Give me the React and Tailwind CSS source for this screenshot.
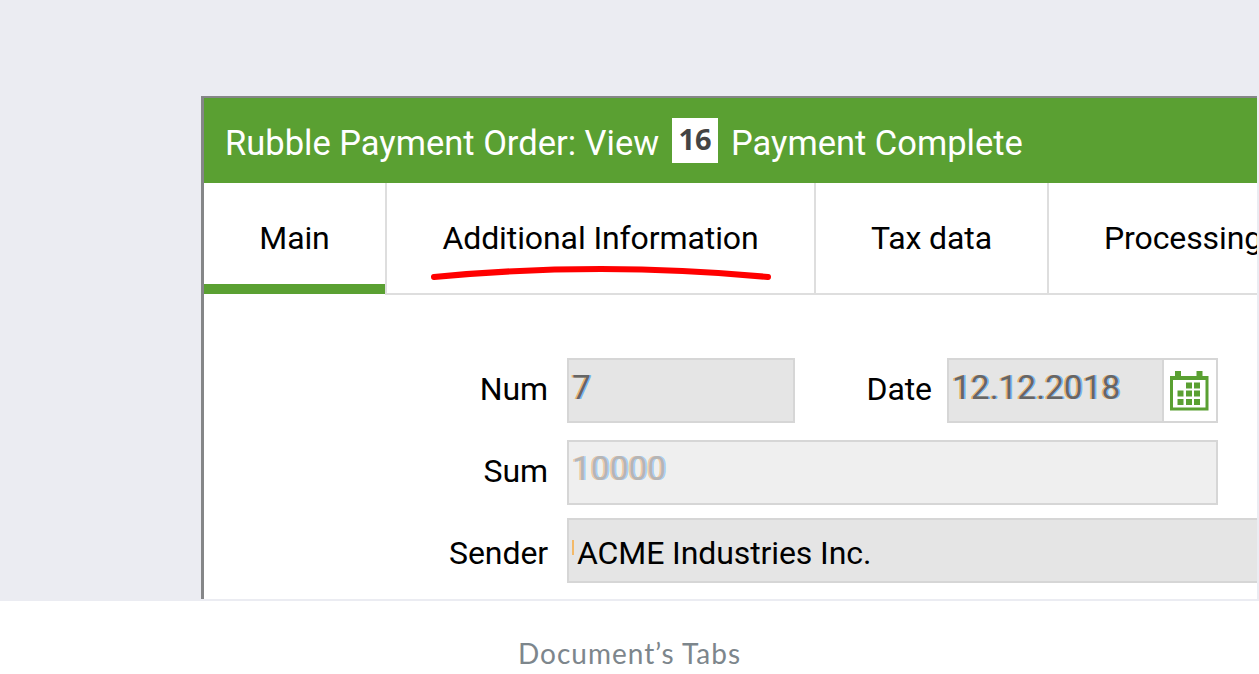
const FRINGE =
  "[text-shadow:-1.5px_0_0.5px_rgba(240,150,40,0.6),1.5px_0_0.5px_rgba(50,155,255,0.6)]";

function Label({ children, className = "" }) {
  return (
    <span
      className={`shrink-0 whitespace-nowrap text-right text-[32px] leading-[63px] tracking-[-0.1px] text-black ${className}`}
    >
      {children}
    </span>
  );
}

function CalendarIcon() {
  return (
    <svg width="40" height="40" viewBox="0 0 40 40" className="mr-[3px] block" fill="#5aa032">
      <rect x="6" y="0" width="6" height="7" />
      <rect x="27.500" y="0" width="6" height="7" />
      <path d="M1 5H39.500V39.500H1V5ZM4 9V36.500H36.500V9H4Z" fillRule="evenodd" />
      <rect x="17" y="11.500" width="6" height="6" />
      <rect x="25" y="11.500" width="6" height="6" />
      <rect x="8.500" y="19.500" width="6" height="6" />
      <rect x="17" y="19.500" width="6" height="6" />
      <rect x="25" y="19.500" width="6" height="6" />
      <rect x="8.500" y="28" width="6" height="6" />
      <rect x="17" y="28" width="6" height="6" />
      <rect x="25" y="28" width="6" height="6" />
    </svg>
  );
}

export default function App() {
  return (
    <div className="flex h-[674px] w-[1259px] flex-col overflow-hidden bg-white font-[Roboto,'Liberation_Sans',sans-serif]">
      <div className="h-[601px] shrink-0 bg-[#ebecf2] pt-24 pr-[2px] pb-[2px] pl-[201px]">
        <main className="flex h-[503px] flex-col overflow-hidden border-t-2 border-l-[3px] border-[#858688] bg-white">
          <header className="flex h-[85px] shrink-0 items-center bg-[#5aa032] pl-[21px] text-[34.5px] whitespace-nowrap text-white">
            <span className="w-[447px] pt-[7px] tracking-[0px]">Rubble Payment Order: View</span>
            <span className="flex h-[45px] w-[46px] items-center justify-center bg-white pb-[3px] font-['Noto_Sans',sans-serif] text-[29px] font-bold text-[#444]">
              16
            </span>
            <span className="ml-[13px] pt-[7px] tracking-[0px]">Payment Complete</span>
          </header>

          <nav className="flex h-[112px] shrink-0 text-[32px] tracking-[-0.1px] whitespace-nowrap text-black">
            <div className="flex w-[181px] shrink-0 flex-col">
              <span className="h-[101px] text-center leading-[111px]">Main</span>
              <span className="h-[10px] bg-[#5aa032]" />
            </div>
            <div className="relative w-[429px] shrink-0 border-b-2 border-l-2 border-[#dedede] text-center leading-[111px]">
              Additional Information
              <svg
                className="absolute top-[80px] left-[42px]"
                width="346"
                height="20"
                viewBox="0 0 346 20"
                fill="none"
                stroke="#ff0000"
                strokeWidth="6"
                strokeLinecap="round"
              >
                <path d="M5 14Q172 -2 339 14" />
              </svg>
            </div>
            <div className="w-[233px] shrink-0 border-b-2 border-l-2 border-[#dedede] text-center leading-[111px]">
              Tax data
            </div>
            <div className="min-w-0 flex-1 overflow-hidden border-b-2 border-l-2 border-[#dedede] pl-[55px] leading-[111px]">
              Processing
            </div>
          </nav>

          <section className="flex flex-col pt-[63px]">
            <div className="flex h-[82px]">
              <Label className="w-[344px]">Num</Label>
              <div className={`ml-[19px] h-[65px] w-[228px] border-2 border-[#d6d6d6] bg-[#e5e5e5] pl-[3px] text-[33.5px] leading-[55px] text-[#666] ${FRINGE}`}>
                7
              </div>
              <Label className="w-[137px]">Date</Label>
              <div className="ml-[15px] flex h-[65px] w-[271px] border-2 border-[#d6d6d6] bg-[#e5e5e5]">
                <span className={`w-[213px] pl-[3px] text-[33.5px] leading-[55px] text-[#666] ${FRINGE}`}>
                  12.12.2018
                </span>
                <span className="flex flex-1 items-center justify-center border-l-2 border-[#d6d6d6] bg-white">
                  <CalendarIcon />
                </span>
              </div>
            </div>
            <div className="flex h-[78px]">
              <Label className="w-[344px]">Sum</Label>
              <div className="ml-[19px] h-[65px] w-[651px] border-2 border-[#d6d6d6] bg-[#efefef] pl-[3px] text-[33.5px] leading-[53px] text-[#b5b5b5] [text-shadow:-1.5px_0_0.5px_rgba(240,160,80,0.45),1.5px_0_0.5px_rgba(80,170,255,0.45)]">
                10000
              </div>
            </div>
            <div className="flex h-[65px]">
              <Label className="w-[344px] pt-1">Sender</Label>
              <div className="ml-[19px] flex h-[65px] flex-1 border-y-2 border-l-2 border-[#d6d6d6] bg-[#e5e5e5] pl-[3px] text-[32px] leading-[67px] tracking-[-0.1px] whitespace-nowrap text-black">
                <span className="mt-[20px] mr-[3px] h-[15px] w-[2px] bg-[#f3b968]" />
                ACME Industries Inc.
              </div>
            </div>
          </section>
        </main>
      </div>
      <footer className="flex flex-1 items-center justify-center pt-[31px] pb-0">
        <span className="font-[Lato,sans-serif] text-[28px] leading-10 tracking-[1px] text-[#7d868c]">
          Document’s Tabs
        </span>
      </footer>
    </div>
  );
}
